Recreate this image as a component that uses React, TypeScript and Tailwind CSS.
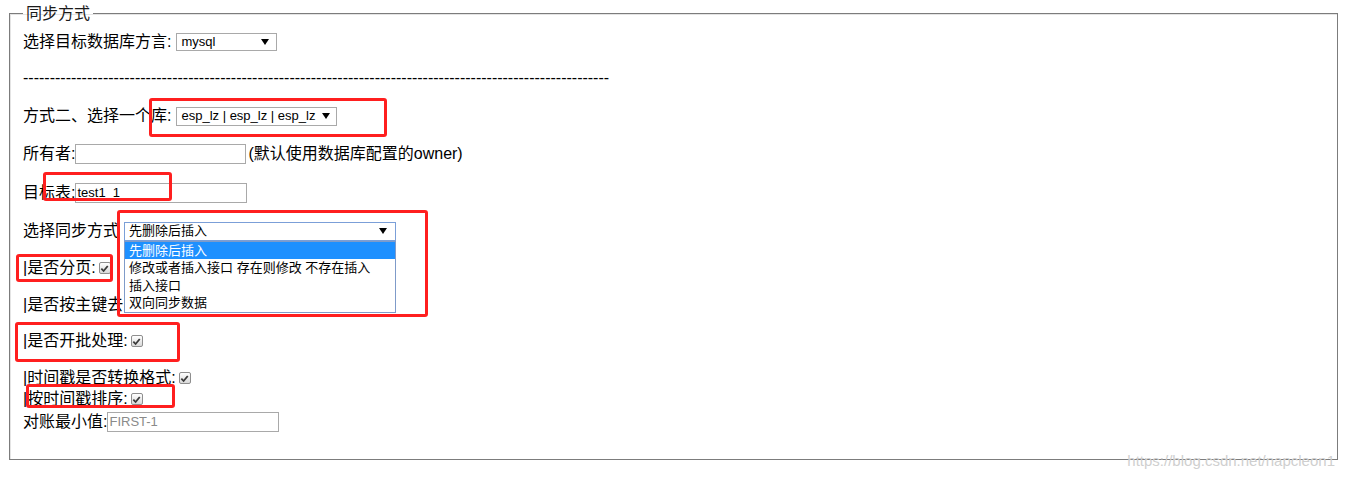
import React from "react";

const LABEL_FONT = "font-['Liberation_Sans','Noto_Sans_CJK_SC',sans-serif]";

function Check() {
  return (
    <span className="ml-[3px] inline-flex h-[12px] w-[12px] items-center justify-center rounded-[2px] border border-[#8e8e8e] bg-linear-to-b from-white to-[#d9d9d9]">
      <svg width="9" height="9" viewBox="0 0 10 10">
        <path d="M1.5 5.2 L4 7.8 L8.6 2.2" stroke="#3a3a3a" strokeWidth="2" fill="none" />
      </svg>
    </span>
  );
}

function Arrow() {
  return (
    <svg width="8" height="6" viewBox="0 0 8 6" className="shrink-0">
      <path d="M0 0 H8 L4 6 Z" fill="#000" />
    </svg>
  );
}

function RedBox({ cls }: { cls: string }) {
  return <div className={`pointer-events-none absolute rounded-[3px] border-[3px] border-[#ff1f1f] ${cls}`} />;
}

export default function App() {
  return (
    <div className={`relative h-[479px] w-[1345px] overflow-hidden bg-white text-[16px] leading-[20px] text-black ${LABEL_FONT}`}>
      <div className="pl-[9px] pr-[7px] pt-[3px]">
        <fieldset className="border border-[#7c7c7c] pb-[27px] pl-[13px] pr-[13px] shadow-[inset_1px_1px_0_#e4e4e4]">
          <legend className="px-[3px] leading-[21px] text-[#1a1a1a]">同步方式</legend>

          {/* row 1 */}
          <div className="mt-[8px] flex h-[20px] items-center">
            <span>选择目标数据库方言:</span>
            <div className="ml-[5px] flex h-[18px] w-[101px] items-center justify-between border border-[#a9a9a9] bg-white pl-[4px] pr-[7px] font-['Liberation_Sans',sans-serif] text-[13px] leading-[16px]">
              <span>mysql</span>
              <Arrow />
            </div>
          </div>

          {/* row 2 dashes */}
          <div className="mt-[16px] flex h-[20px] items-center whitespace-nowrap font-['Liberation_Sans',sans-serif]">
            {"-".repeat(110)}
          </div>

          {/* row 3 */}
          <div className="mt-[18px] flex h-[20px] items-center">
            <span>方式二、选择一个库:</span>
            <div className="ml-[5px] flex h-[19px] w-[161px] items-center justify-between border border-[#a9a9a9] bg-white pl-[4px] pr-[6px] font-['Liberation_Sans',sans-serif] text-[13px] leading-[16px]">
              <span>esp_lz | esp_lz | esp_lz</span>
              <Arrow />
            </div>
          </div>

          {/* row 4 */}
          <div className="mt-[18px] flex h-[20px] items-center">
            <span>所有者:</span>
            <div className="h-[20px] w-[171px] border border-[#a9a9a9] bg-white" />
            <span className="ml-[2px]">(默认使用数据库配置的owner)</span>
          </div>

          {/* row 5 */}
          <div className="mt-[19px] flex h-[20px] items-center">
            <span>目标表:</span>
            <div className="flex h-[20px] w-[172px] items-center border border-[#a9a9a9] bg-white pl-[1px] font-['Liberation_Sans',sans-serif] text-[13px]">
              test1_1
            </div>
          </div>

          {/* row 6 */}
          <div className="mt-[18px] flex h-[20px] items-center">
            <span>选择同步方式</span>
            <div className="relative ml-[5px]">
              <div className="flex h-[19px] w-[272px] items-center justify-between border border-[#7b9fd8] bg-white pl-[4px] pr-[8px] text-[13px] leading-[16px]">
                <span>先删除后插入</span>
                <Arrow />
              </div>
              <div className="absolute left-0 top-[19px] z-10 flex w-[272px] flex-col border border-[#7f9bc9] bg-white text-[13px] leading-[17.5px]">
                <div className="bg-[#1e90ff] pl-[4px] text-white">先删除后插入</div>
                <div className="pl-[4px]">修改或者插入接口 存在则修改 不存在插入</div>
                <div className="pl-[4px]">插入接口</div>
                <div className="pl-[4px]">双向同步数据</div>
              </div>
            </div>
          </div>

          {/* row 7 */}
          <div className="mt-[17px] flex h-[20px] items-center">
            <span>|是否分页:</span>
            <Check />
          </div>

          {/* row 8 (rest hidden behind the open list) */}
          <div className="mt-[17px] flex h-[20px] items-center">
            <span>|是否按主键去</span>
          </div>

          {/* row 9 */}
          <div className="mt-[16px] flex h-[20px] items-center">
            <span>|是否开批处理:</span>
            <Check />
          </div>

          {/* row 10 */}
          <div className="mt-[17px] flex h-[20px] items-center">
            <span>|时间戳是否转换格式:</span>
            <Check />
          </div>

          {/* row 11 */}
          <div className="mt-[1px] flex h-[20px] items-center">
            <span>|按时间戳排序:</span>
            <Check />
          </div>

          {/* row 12 */}
          <div className="mt-[3px] flex h-[20px] items-center">
            <span>对账最小值:</span>
            <div className="flex h-[20px] w-[172px] items-center border border-[#a9a9a9] bg-white pl-[1px] font-['Liberation_Sans',sans-serif] text-[13px] text-[#8a8a8a]">
              FIRST-1
            </div>
          </div>
        </fieldset>
      </div>

      <RedBox cls="left-[149px] top-[98px] h-[39px] w-[238px]" />
      <RedBox cls="left-[43px] top-[172px] h-[29px] w-[129px]" />
      <RedBox cls="left-[117px] top-[210px] h-[107px] w-[311px]" />
      <RedBox cls="left-[16px] top-[254px] h-[28px] w-[97px]" />
      <RedBox cls="left-[15px] top-[322px] h-[40px] w-[165px]" />
      <RedBox cls="left-[26px] top-[384px] h-[24px] w-[149px]" />

      <div className="absolute right-[10px] top-[452px] font-['Liberation_Sans',sans-serif] text-[15px] leading-[18px] text-[#cfcfcf]">
        https://blog.csdn.net/napcleon1
      </div>
    </div>
  );
}
